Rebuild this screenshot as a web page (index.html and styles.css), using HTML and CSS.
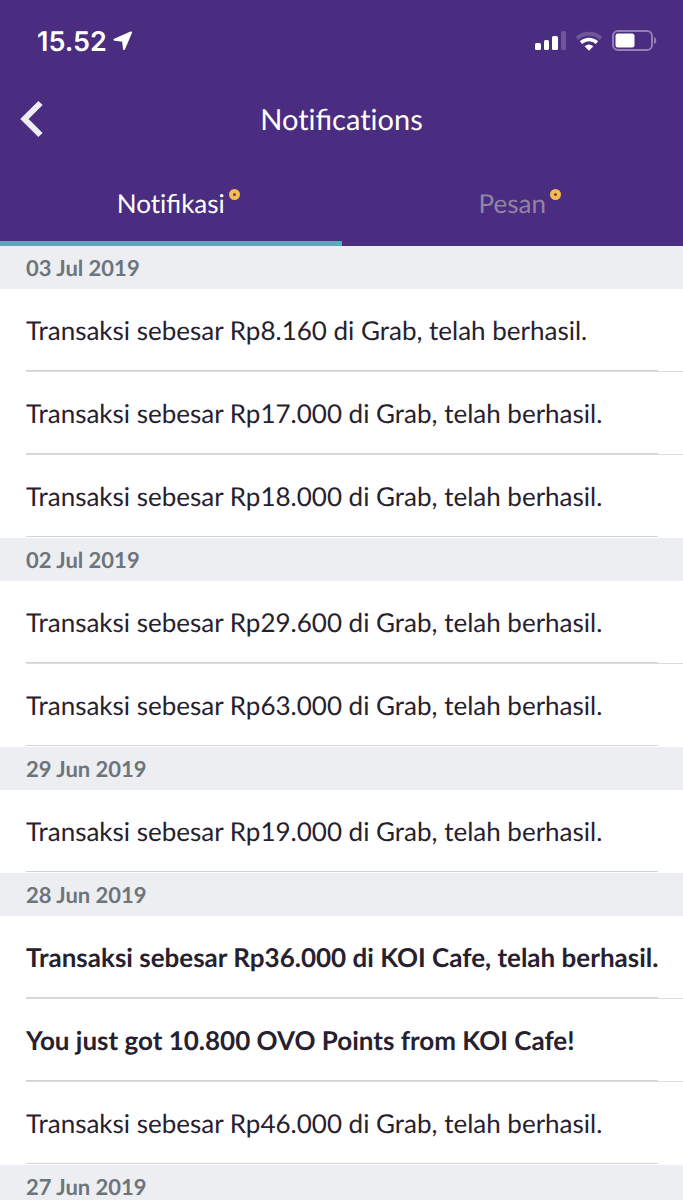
FILE: index.html
```html
<!DOCTYPE html>
<html lang="id">
<head>
    <meta charset="UTF-8">
    <meta name="viewport" content="width=device-width, initial-scale=1.0">
    <title>Notifications</title>
    <link rel="stylesheet" href="styles.css">
</head>
<body>
    <header class="header">
        <div class="status-bar">
            <div class="clock">
                <span>15.52</span>
                <svg width="20" height="20" viewBox="0 0 20 20" fill="#fff" stroke="#fff" stroke-linejoin="round">
                    <path d="M18 1.500 1.500 8.700l8.500 1 1 8.300z" stroke-width="2"/>
                </svg>
            </div>
            <div class="indicators">
                <!-- Signal -->
                <svg width="31" height="20" viewBox="0 0 31 20" fill="#fff">
                    <rect x="0" y="12" width="6" height="7" rx="1.500"/>
                    <rect x="9" y="9" width="5" height="10" rx="1.500"/>
                    <rect x="17" y="5" width="6" height="14" rx="1.500"/>
                    <rect x="26" y="0" width="5" height="19" rx="1.500" opacity="0.2"/>
                </svg>
                <!-- Wifi -->
                <svg width="28" height="20" viewBox="0 0 28 20">
                    <path d="M2 7.500a17.500 17.500 0 0 1 24 0" fill="none" stroke="#fff" stroke-width="4" opacity="0.2"/>
                    <path d="M6 11.600a12 12 0 0 1 16 0" fill="none" stroke="#fff" stroke-width="3.500"/>
                    <path d="M9.600 15.300a7 7 0 0 1 8.800 0L14 19.700z" fill="#fff"/>
                </svg>
                <!-- Battery -->
                <svg width="45" height="22" viewBox="0 0 45 22">
                    <rect x="1" y="1" width="39" height="19" rx="5" fill="none" stroke="#fff" stroke-width="2" opacity="0.4"/>
                    <rect x="3.500" y="3.500" width="19" height="14" rx="2.500" fill="#fff"/>
                    <path d="M42 7c3 1 3 6 0 7z" fill="#fff" opacity="0.4"/>
                </svg>
            </div>
        </div>

        <div class="title-bar">
            <button class="back" type="button" aria-label="Back">
                <svg width="24" height="38" viewBox="0 0 24 38" fill="none" stroke="#f0edf5" stroke-width="6">
                    <path d="M20.500 3 4.500 19l16 16"/>
                </svg>
            </button>
            <h1>Noti<span class="lig">fi</span>cations</h1>
        </div>

        <nav class="tabs">
            <a href="#notifikasi" class="tab active"><span class="label">Noti<span class="lig">fi</span>kasi<span class="dot"></span></span></a>
            <a href="#pesan" class="tab"><span class="label">Pesan<span class="dot"></span></span></a>
        </nav>
    </header>

    <main id="notifikasi">
        <section>
            <h2>03 Jul 2019</h2>
            <ul>
                <li>Transaksi sebesar Rp8.160 di Grab, telah berhasil.</li>
                <li>Transaksi sebesar Rp17.000 di Grab, telah berhasil.</li>
                <li>Transaksi sebesar Rp18.000 di Grab, telah berhasil.</li>
            </ul>
        </section>
        <section>
            <h2>02 Jul 2019</h2>
            <ul>
                <li>Transaksi sebesar Rp29.600 di Grab, telah berhasil.</li>
                <li>Transaksi sebesar Rp63.000 di Grab, telah berhasil.</li>
            </ul>
        </section>
        <section>
            <h2>29 Jun 2019</h2>
            <ul>
                <li>Transaksi sebesar Rp19.000 di Grab, telah berhasil.</li>
            </ul>
        </section>
        <section>
            <h2>28 Jun 2019</h2>
            <ul>
                <li class="unread">Transaksi sebesar Rp36.000 di KOI Cafe, telah berhasil.</li>
                <li class="unread">You just got 10.800 OVO Points from KOI Cafe!</li>
                <li>Transaksi sebesar Rp46.000 di Grab, telah berhasil.</li>
            </ul>
        </section>
        <section>
            <h2>27 Jun 2019</h2>
        </section>
    </main>
</body>
</html>
```
FILE: styles.css
```css
* {
    box-sizing: border-box;
}
body {
    margin: 0;
    font-family: Lato, "Open Sans", sans-serif;
    font-size: 26px;
    font-variant-ligatures: none;
    text-rendering: geometricPrecision;
    color: #27212f;
    background-color: #fff;
}
/* keep the joined "fi" but not the "ti" next to it */
.lig {
    font-variant-ligatures: normal;
}
.header {
    background-color: #4a2c80;
    color: #fff;
}
.status-bar {
    display: flex;
    justify-content: space-between;
    align-items: center;
    height: 82px;
    padding: 0 26px 0 37px;
}
.clock {
    display: flex;
    align-items: center;
    gap: 6px;
    font-family: Inter, sans-serif;
    font-size: 27px;
    font-weight: 600;
}
.indicators {
    display: flex;
    align-items: center;
    gap: 9px;
}
.title-bar {
    display: grid;
    grid-template-columns: 64px 1fr 64px;
    align-items: center;
    height: 74px;
}
.title-bar h1 {
    margin: 0;
    font-size: 29px;
    font-weight: 400;
    text-align: center;
}
.back {
    display: flex;
    padding: 0 0 0 20px;
    border: none;
    background: none;
    cursor: pointer;
}
.tabs {
    display: flex;
}
.tab {
    flex: 1;
    height: 90px;
    padding-top: 31px;
    border-bottom: 5px solid transparent;
    color: #9384a5;
    line-height: 32px;
    text-align: center;
    text-decoration: none;
}
.tab.active {
    color: #fff;
    border-bottom-color: #50afbb;
}
.label {
    position: relative;
}
.dot {
    position: absolute;
    top: 2px;
    right: -15px;
    width: 11px;
    height: 11px;
    border: 4px solid #f5bd4f;
    border-radius: 50%;
    background-color: #7a3a50;
}
h2 {
    margin: 0;
    padding: 0 26px;
    font-size: 22px;
    line-height: 43px;
    color: #6c757b;
    background-color: #edeef2;
}
ul {
    margin: 0;
    padding: 0 0 0 26px;
    list-style: none;
}
li {
    height: 83px;
    padding-top: 23px;
    line-height: 36px;
    border-bottom: 1px solid #dcdcdf;
    /* thicker divider that stops before the right edge */
    background: linear-gradient(#d3d3d6, #d3d3d6) left bottom / calc(100% - 25px) 1px no-repeat;
}
li:last-child {
    border-bottom-color: #fff;
}
.unread {
    font-weight: 700;
}
```
